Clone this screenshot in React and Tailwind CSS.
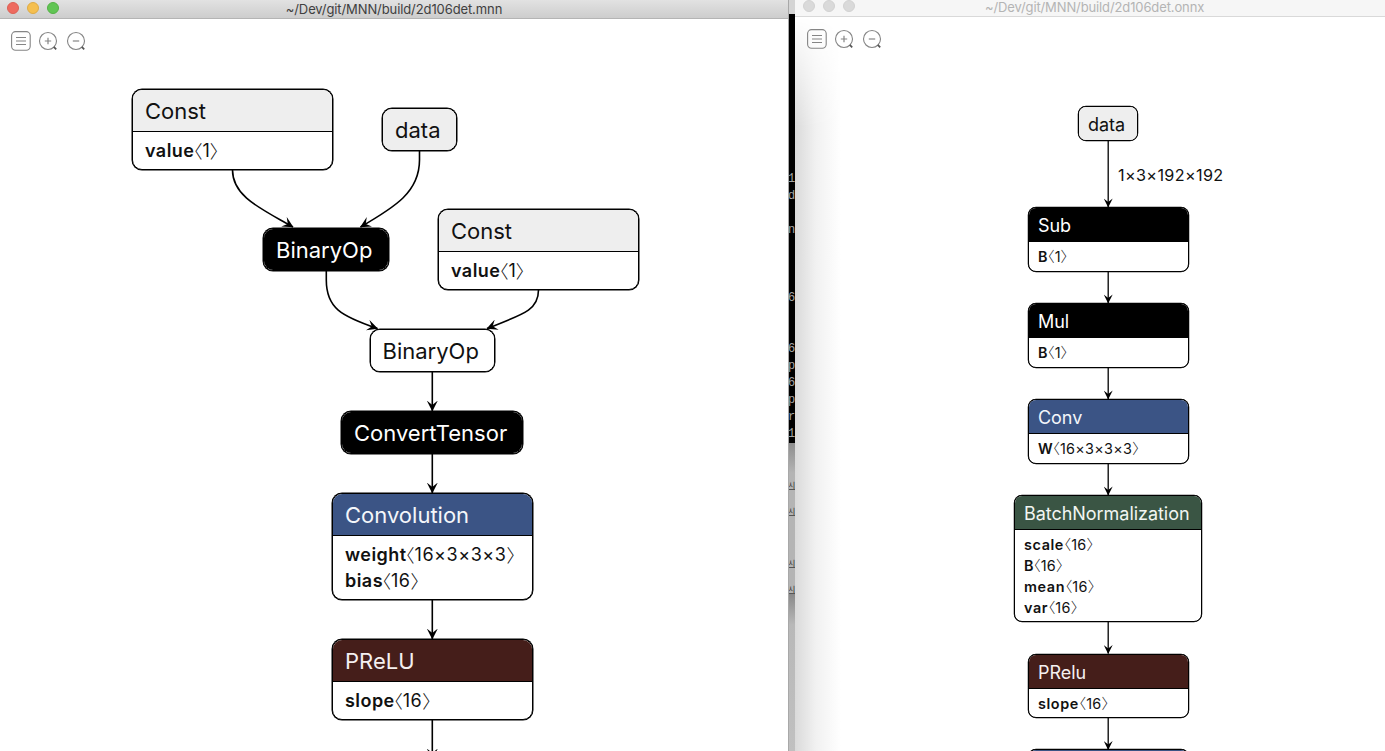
import React from "react";
import clsx from "clsx";

function ToolbarIcons() {
  return (
    <div className="flex gap-[6px]">
      <svg width="22" height="22" viewBox="0 0 22 22" fill="none" stroke="#858585">
        <rect x="1.6" y="1.6" width="18.6" height="18.6" rx="4" strokeWidth="1.1" />
        <path d="M6 7.5H16M6 11H16M6 14.5H16" strokeWidth="1" />
      </svg>
      <svg width="22" height="22" viewBox="0 0 22 22" fill="none" stroke="#858585">
        <circle cx="10" cy="11" r="8.5" strokeWidth="1.1" />
        <path d="M6.8 11H13.2M10 7.8V14.2" strokeWidth="1.2" />
        <path d="M15.8 16.9L18.2 19.3" stroke="#555" strokeWidth="1.8" />
      </svg>
      <svg width="22" height="22" viewBox="0 0 22 22" fill="none" stroke="#858585">
        <circle cx="10" cy="11" r="8.5" strokeWidth="1.1" />
        <path d="M6.8 11H13.2" strokeWidth="1.2" />
        <path d="M15.8 16.9L18.2 19.3" stroke="#555" strokeWidth="1.8" />
      </svg>
    </div>
  );
}

function Node({ place, title, tone, rows, small }) {
  return (
    <div
      className={clsx(
        "absolute flex flex-col overflow-hidden border border-black bg-white",
        small ? "rounded-[8px] shadow-[0_0_0_0.25px_#000]" : "rounded-[10px] shadow-[0_0_0_0.5px_#000]",
        place
      )}
    >
      <div
        className={clsx(
          "flex shrink-0 items-center whitespace-nowrap",
          small ? "h-[33px] pl-[9px] pt-[1px] text-[18px] tracking-[-0.04px]" : "h-[41px] pl-[12px] pt-[2px] text-[22px]",
          tone
        )}
      >
        {title}
      </div>
      {rows && (
        <div className={clsx("border-t border-black", small ? "px-[9px] pt-[4px]" : "px-[12px] pt-[5px]")}>
          {rows.map(([name, shape, shapeSpacing]) => (
            <div
              key={name}
              className={clsx(
                "flex items-center whitespace-nowrap",
                small ? "h-[21px] text-[14.4px]" : "h-[26px] text-[18px]"
              )}
            >
              <span
                className={clsx(
                  "font-semibold",
                  name.length > 1 && (small ? "tracking-[0.6px]" : "tracking-[0.45px]"),
                  !small && "-mr-[1px]"
                )}
              >
                {name}
              </span>
              <Bracket small={small}>〈</Bracket>
              <span className={shapeSpacing}>{shape}</span>
              <Bracket small={small}>〉</Bracket>
            </div>
          ))}
        </div>
      )}
    </div>
  );
}

function Bracket({ children, small }) {
  return (
    <span
      className={clsx(
        "[font-family:'Noto_Sans_CJK_JP',sans-serif] font-light leading-none [font-feature-settings:'halt']",
        small ? "text-[14.4px]" : "text-[18px]"
      )}
    >
      {children}
    </span>
  );
}

function Edges({ id, size, paths, width }) {
  return (
    <svg className="absolute inset-0 h-full w-full" fill="none" stroke="#000" strokeWidth={width}>
      <defs>
        <marker
          id={id}
          viewBox="0 0 10 10"
          refX="9.5"
          refY="5"
          markerUnits="userSpaceOnUse"
          markerWidth={size}
          markerHeight={size}
          orient="auto"
        >
          <path d="M0 0L10 5L0 10L4 5Z" fill="#000" stroke="none" />
        </marker>
      </defs>
      {paths.map((d) => (
        <path key={d} d={d} markerEnd={`url(#${id})`} />
      ))}
    </svg>
  );
}

const gray = "bg-[#eeeeee] text-[#111]";
const black = "bg-black text-white";
const blue = "bg-[#3b5485] text-[#f4f6fa]";
const brown = "bg-[#451e1a] text-[#f4f0f0]";
const green = "bg-[#3a5544] text-[#f1f5f2]";

function MnnWindow() {
  return (
    <section className="flex w-[788px] shrink-0 flex-col bg-white">
      <header className="relative flex h-[19px] shrink-0 items-start justify-center border-b border-[#b4b4b4] bg-linear-to-b from-[#e2e2e2] to-[#cdcdcd]">
        <div className="absolute left-[7px] top-[2px] flex gap-[8px]">
          <i className="size-3 rounded-full border border-[#dc6055] bg-[#ee6a5f]" />
          <i className="size-3 rounded-full border border-[#deab45] bg-[#f5bf4f]" />
          <i className="size-3 rounded-full border border-[#54b146] bg-[#61c554]" />
        </div>
        <h1 className="text-[13px] leading-[18px] tracking-[-0.1px] text-[#404040]">~/Dev/git/MNN/build/2d106det.mnn</h1>
      </header>
      <main className="relative grow overflow-hidden">
        <div className="pl-[10px] pt-[11px]">
          <ToolbarIcons />
        </div>
        <div className="absolute left-0 -top-[19px] h-[751px] w-[788px]">
          <Edges
            id="arrow-mnn"
            size={11}
            width={1.6}
            paths={[
              "M232.5 170C232.5 197 262 209 293 227",
              "M419.5 151V160C419.5 192 395 207 360.500 227",
              "M326.3 271V280C326.3 308 341 316 377.500 328.500",
              "M538.5 290C538.5 310 524 314 487 328.500",
              "M432.300 372V411",
              "M432.300 454V493",
              "M432.300 600V639",
              "M432.300 720V759",
            ]}
          />
          <Node place="left-[132px] top-[89px] w-[201px] h-[81px]" title="Const" tone={gray} rows={[["value", "1", ""]]} />
          <Node place="left-[382px] top-[108px] w-[75px] h-[43px]" title="data" tone={gray} />
          <Node place="left-[263px] top-[228px] w-[126px] h-[43px]" title="BinaryOp" tone={black} />
          <Node place="left-[438px] top-[209px] w-[201px] h-[81px]" title="Const" tone={gray} rows={[["value", "1", ""]]} />
          <Node place="left-[369.5px] top-[329px] w-[125.5px] h-[43px]" title="BinaryOp" tone="bg-white text-[#111]" />
          <Node place="left-[341px] top-[411px] w-[182px] h-[43px]" title="ConvertTensor" tone={black} />
          <Node
            place="left-[332px] top-[493px] w-[201px] h-[107px]"
            title="Convolution"
            tone={blue}
            rows={[
              ["weight", "16×3×3×3", "tracking-[0.55px]"],
              ["bias", "16", "tracking-[0.5px]"],
            ]}
          />
          <Node place="left-[332px] top-[639px] w-[201px] h-[81px]" title="PReLU" tone={brown} rows={[["slope", "16", "tracking-[0.5px]"]]} />
        </div>
      </main>
    </section>
  );
}

const terminalChars = [
  ["1", "top-[172px]"],
  ["d", "top-[189px]"],
  ["n", "top-[223px]"],
  ["6", "top-[291px]"],
  ["6", "top-[342px]"],
  ["p", "top-[359px]"],
  ["6", "top-[376px]"],
  ["p", "top-[393px]"],
  ["r", "top-[410px]"],
  ["1", "top-[427px]"],
];

const fileChars = ["top-[480px]", "top-[506px]", "top-[558px]", "top-[584px]"];

function BackgroundStrip() {
  return (
    <div className="relative flex w-[7px] shrink-0 flex-col overflow-hidden border-l border-[#a8a8a8]">
      <div className="h-[14px] bg-[#d4d4d4]" />
      <div className="h-[429px] bg-black" />
      <div className="h-[150px] bg-linear-to-b from-[#8d8d8d] via-[#b4b4b4] via-20% to-[#b4b4b4]" />
      <div className="grow bg-linear-to-b from-[#888] via-[#b8b8b8] via-20% to-[#c0c0c0]" />
      {terminalChars.map(([char, top]) => (
        <span key={top} className={clsx("absolute -left-[1px] font-['Liberation_Mono',monospace] text-[12px] leading-[14px] text-[#a5a5a5]", top)}>
          {char}
        </span>
      ))}
      {fileChars.map((top) => (
        <span key={top} className={clsx("absolute -left-[1px] border-b border-[#555] [font-family:'Noto_Sans_CJK_KR',sans-serif] text-[8px] leading-[9px] text-[#333]", top)}>
          시
        </span>
      ))}
    </div>
  );
}

function OnnxWindow() {
  return (
    <section className="relative flex min-w-0 grow flex-col bg-white">
      <header className="relative h-[17px] shrink-0 border-b border-[#d9d9d9] bg-[#f6f6f6]">
        <div className="absolute left-[8px] top-0 flex gap-[8px]">
          <i className="size-3 rounded-full border border-[#d2d2d2] bg-[#dadada]" />
          <i className="size-3 rounded-full border border-[#d2d2d2] bg-[#dadada]" />
          <i className="size-3 rounded-full border border-[#d2d2d2] bg-[#dadada]" />
        </div>
        <h1 className="pl-[190px] text-[13px] leading-[14px] tracking-[-0.12px] text-[#b4b4b4]">~/Dev/git/MNN/build/2d106det.onnx</h1>
      </header>
      <main className="relative grow overflow-hidden">
        <div className="absolute inset-y-0 left-0 w-[46px] bg-linear-to-r from-[#dadada] via-[#f1f1f1] via-45% to-white [mask-image:linear-gradient(to_bottom,transparent,black_110px)]" />
        <div className="relative pl-[11px] pt-[11px]">
          <ToolbarIcons />
        </div>
        <div className="absolute left-0 -top-[17px] h-[751px] w-[590px]">
          <Edges
            id="arrow-onnx"
            size={9}
            width={1.3}
            paths={[
              "M313.200 141V207",
              "M313.200 272V303",
              "M313.200 368V399",
              "M313.200 464V495",
              "M313.200 622V653.500",
              "M313.200 718V749.500",
            ]}
          />
          <span className="absolute left-[323px] top-[165px] whitespace-nowrap text-[16.2px] leading-[20px] tracking-[0.35px] text-[#111]">1×3×192×192</span>
          <Node small place="left-[283px] top-[106px] w-[60px] h-[35px]" title="data" tone={gray} />
          <Node small place="left-[233px] top-[207px] w-[161px] h-[65px]" title="Sub" tone={black} rows={[["B", "1", ""]]} />
          <Node small place="left-[233px] top-[303px] w-[161px] h-[65px]" title="Mul" tone={black} rows={[["B", "1", ""]]} />
          <Node small place="left-[233px] top-[399px] w-[161px] h-[65px]" title="Conv" tone={blue} rows={[["W", "16×3×3×3", "tracking-[0.3px]"]]} />
          <Node
            small
            place="left-[219px] top-[495px] w-[188px] h-[127px]"
            title="BatchNormalization"
            tone={green}
            rows={[
              ["scale", "16", "tracking-[0.3px]"],
              ["B", "16", "tracking-[0.3px]"],
              ["mean", "16", "tracking-[0.3px]"],
              ["var", "16", "tracking-[0.3px]"],
            ]}
          />
          <Node small place="left-[233px] top-[654px] w-[161px] h-[64px]" title="PRelu" tone={brown} rows={[["slope", "16", "tracking-[0.3px]"]]} />
          <Node small place="left-[233px] top-[749px] w-[161px] h-[65px]" title="" tone={blue} />
        </div>
      </main>
    </section>
  );
}

export default function App() {
  return (
    <div className="flex h-[751px] w-[1385px] overflow-hidden bg-white font-['Inter',sans-serif] text-[#111]">
      <MnnWindow />
      <BackgroundStrip />
      <OnnxWindow />
    </div>
  );
}
